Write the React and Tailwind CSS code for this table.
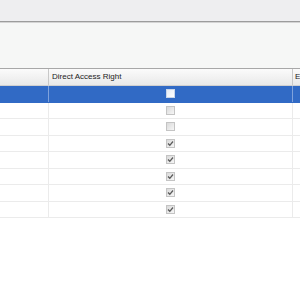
const rows = [
  { selected: true, checked: false },
  { selected: false, checked: false },
  { selected: false, checked: false },
  { selected: false, checked: true },
  { selected: false, checked: true },
  { selected: false, checked: true },
  { selected: false, checked: true },
  { selected: false, checked: true },
];

// small XP-style checkbox
const Check = ({ checked, selected }) => (
  <div
    className={
      "w-[9px] h-[9px] border flex items-center justify-center " +
      (selected
        ? "border-[#c9d6ea] bg-gradient-to-br from-[#e6ecf5] to-[#ffffff]"
        : "border-[#c4c4c4] bg-gradient-to-br from-[#dadada] to-[#f6f6f6]")
    }
  >
    {checked && (
      <svg width="7" height="7" viewBox="0 0 7 7">
        <path d="M1 3.5 L2.8 5.3 L6 1.5" fill="none" stroke="#5a5a5a" strokeWidth="1.3" />
      </svg>
    )}
  </div>
);

export default function App() {
  return (
    <div
      className="w-[300px] h-[300px] bg-white overflow-hidden flex flex-col"
      style={{ fontFamily: '"Liberation Sans", Arial, sans-serif' }}
    >
      {/* toolbar strip */}
      <div className="h-[22px] shrink-0 bg-[#eeeef0] border-b border-[#9c9c9c]" />
      <div className="h-[1px] shrink-0 bg-[#d4d4d4]" />
      {/* empty panel */}
      <div className="h-[46px] shrink-0 bg-[#f6f7f6] border-b border-[#a8a8a8]" />

      {/* grid header */}
      <div className="grid grid-cols-[49px_244px_1fr] h-[17px] shrink-0 bg-gradient-to-b from-[#fbfbfb] to-[#e9e9e9] border-b border-[#d0d0d0] text-[8px] text-[#222]">
        <div className="border-r border-[#c8c8c8]" />
        <div className="border-r border-[#c8c8c8] flex items-center pl-[3px]">Direct Access Right</div>
        <div className="flex items-center pl-[2px]">E</div>
      </div>

      {/* rows */}
      {rows.map((r, i) => (
        <div
          key={i}
          className={
            "grid grid-cols-[49px_244px_1fr] h-[16.5px] shrink-0 border-b " +
            (r.selected ? "bg-[#316ac5] border-[#316ac5]" : "bg-white border-[#ebebeb]")
          }
        >
          <div className={"border-r " + (r.selected ? "border-[#7fa2dc]" : "border-[#ebebeb]")} />
          <div
            className={
              "border-r flex items-center justify-center " +
              (r.selected ? "border-[#7fa2dc]" : "border-[#ebebeb]")
            }
          >
            <Check checked={r.checked} selected={r.selected} />
          </div>
          <div />
        </div>
      ))}
    </div>
  );
}
